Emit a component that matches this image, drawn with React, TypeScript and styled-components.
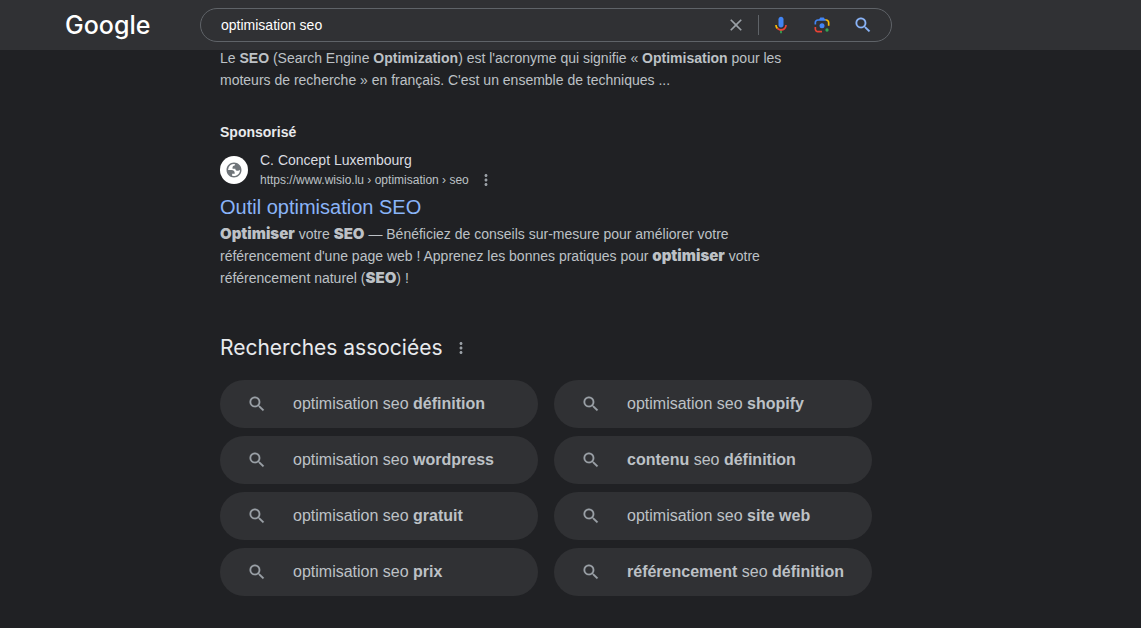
import React from 'react';
import styled, { createGlobalStyle } from 'styled-components';

const GlobalStyle = createGlobalStyle`
  * { box-sizing: border-box; }
  body {
    margin: 0;
    background: #202124;
    color: #bdc1c6;
    font-family: "Liberation Sans", Arial, sans-serif;
    font-size: 14px;
    line-height: 22px;
  }
  button {
    display: inline-flex;
    align-items: center;
    justify-content: center;
    padding: 0;
    border: 0;
    background: none;
    color: inherit;
    cursor: pointer;
  }
  a { color: inherit; text-decoration: none; }
  p, h1, h2, h3, ul { margin: 0; padding: 0; font-weight: 400; }
  svg { display: block; fill: currentColor; }
`;

const Header = styled.header`
  position: sticky;
  top: 0;
  display: flex;
  align-items: center;
  height: 50px;
  padding: 0 16px 0 65px;
  background: #303134;
`;

const Logo = styled.a`
  flex: 0 0 135px;
  color: #fff;
  font: 500 25px/32px Inter, sans-serif;
`;

const SearchForm = styled.form`
  display: flex;
  flex: 0 1 692px;
  align-items: center;
  height: 34px;
  padding: 0 8px 0 20px;
  border: 1px solid #5f6368;
  border-radius: 17px;
`;

const SearchInput = styled.input`
  flex: 1;
  min-width: 0;
  padding: 0;
  border: 0;
  outline: 0;
  background: none;
  color: #fff;
  font: 14px/22px "Liberation Sans", Arial, sans-serif;
`;

const ClearButton = styled.button`
  width: 44px;
  height: 32px;
  color: #9aa0a6;
`;

const Tools = styled.div`
  display: flex;
  align-items: center;
  height: 20px;
  border-left: 1px solid #5f6368;
  padding-left: 1px;
`;

const ToolButton = styled.button`
  width: 41px;
  height: 32px;
  color: #8ab4f8;
`;

const Main = styled.main`
  max-width: 892px;
  margin-top: -3px;
  padding: 0 20px 32px 220px;
`;

const Snippet = styled.p`
  max-width: 590px;
`;

const Strong = styled.b`
  font: 900 15px/22px Inter, sans-serif;
`;

const Ad = styled.article`
  margin-top: 30px;
`;

const Sponsored = styled.h2`
  color: #e8eaed;
  font-size: 14px;
  font-weight: 700;
`;

const Advertiser = styled.div`
  display: flex;
  align-items: center;
  gap: 12px;
  margin-top: 7px;
`;

const Favicon = styled.span`
  display: flex;
  align-items: center;
  justify-content: center;
  width: 28px;
  height: 28px;
  border-radius: 50%;
  background: #fff;
  color: #70757a;
`;

const SiteName = styled.div`
  color: #dadce0;
  line-height: 20px;
`;

const SiteUrl = styled.div`
  display: flex;
  align-items: center;
  gap: 8px;
  font-size: 12px;
  line-height: 20px;
`;

const MoreButton = styled.button`
  width: 18px;
  height: 20px;
  color: #9aa0a6;
`;

const AdTitle = styled.h3`
  margin: 4px 0 3px;
  color: #8ab4f8;
  font-size: 20px;
  line-height: 26px;
`;

const RelatedHeader = styled.div`
  display: flex;
  align-items: center;
  gap: 9px;
  margin: 45px 0 18px;
`;

const RelatedTitle = styled.h2`
  color: #e8eaed;
  font: 400 21px/28px Inter, sans-serif;
`;

const RelatedGrid = styled.ul`
  display: grid;
  grid-template-columns: repeat(2, minmax(0, 1fr));
  gap: 8px 16px;
  list-style: none;
`;

const RelatedLink = styled.a`
  display: flex;
  align-items: center;
  gap: 26px;
  min-height: 48px;
  padding: 0 27px;
  border-radius: 24px;
  background: #303134;
  font-size: 16px;

  svg { flex: none; color: #9aa0a6; }
`;

const SearchIcon = () => (
  <svg width="20" height="20" viewBox="0 0 24 24" stroke="currentColor" strokeWidth="0.2" aria-hidden="true">
    <path d="M15.5 14h-.79l-.28-.27A6.47 6.47 0 0 0 16 9.5 6.5 6.5 0 1 0 9.5 16c1.61 0 3.09-.59 4.23-1.57l.27.28v.79l5 4.99L20.49 19l-4.99-5zm-6 0C7.01 14 5 11.99 5 9.5S7.01 5 9.5 5 14 7.01 14 9.5 11.99 14 9.5 14z" />
  </svg>
);

const CloseIcon = () => (
  <svg width="20" height="20" viewBox="0 0 24 24" aria-hidden="true">
    <path d="M19 6.41 17.59 5 12 10.59 6.41 5 5 6.41 10.59 12 5 17.59 6.41 19 12 13.41 17.59 19 19 17.59 13.41 12z" />
  </svg>
);

const MicIcon = () => (
  <svg width="20" height="20" viewBox="0 0 24 24" aria-hidden="true">
    <path fill="#4285f4" d="m12 15c1.66 0 3-1.31 3-2.97v-7.02c0-1.66-1.34-3.01-3-3.01s-3 1.34-3 3.01v7.02c0 1.66 1.34 2.97 3 2.97z" />
    <path fill="#34a853" d="m11 18.08h2v3.92h-2z" />
    <path fill="#fbbc04" d="m7.05 16.87c-1.27-1.33-2.05-2.83-2.05-4.87h2c0 1.45.56 2.42 1.47 3.38v.32l-1.15 1.18z" />
    <path fill="#ea4335" d="m12 16.93a4.97 5.25 0 0 1-3.54-1.55l-1.41 1.49c1.26 1.34 3.02 2.13 4.95 2.13 3.87 0 6.99-2.92 6.99-7h-1.99c0 2.92-2.24 4.93-5 4.93z" />
  </svg>
);

const LensIcon = () => (
  <svg width="20" height="20" viewBox="0 0 192 192" aria-hidden="true">
    <circle fill="#34a853" cx="144" cy="144" r="16" />
    <circle fill="#4285f4" cx="96" cy="104" r="24" />
    <path fill="#ea4335" d="M24 135.2c0 18.11 14.69 32.8 32.8 32.8H96v-16l-40.1-.1c-8.8 0-15.9-8.19-15.9-17.9v-18H24z" />
    <path fill="#fbbc04" d="M168 72.8c0-18.11-14.69-32.8-32.8-32.8H116l20 16c8.8 0 16 8.29 16 18v30h16z" />
    <path fill="#4285f4" d="M112 24H80L68 40H56.8C38.69 40 24 54.69 24 72.8V92h16V74c0-9.71 7.2-18 16-18h80z" />
  </svg>
);

const GlobeIcon = () => (
  <svg width="18" height="18" viewBox="0 0 24 24" aria-hidden="true">
    <path d="M12 2c5.52 0 10 4.48 10 10s-4.48 10-10 10S2 17.52 2 12 6.48 2 12 2zM4 12h4.4c3.407.022 4.922 1.73 4.543 5.127H9.488v2.47a8.004 8.004 0 0 0 10.498-8.083C19.327 12.504 18.332 13 17 13c-2.137 0-3.206-.916-3.206-2.75h-3.748c-.274-2.728.683-4.092 2.87-4.092 0-.975.327-1.597.811-1.97A8.004 8.004 0 0 0 4 12z" />
  </svg>
);

const MoreIcon = () => (
  <svg width="18" height="18" viewBox="0 0 24 24" aria-hidden="true">
    <path d="M12 8c1.1 0 2-.9 2-2s-.9-2-2-2-2 .9-2 2 .9 2 2 2zm0 2c-1.1 0-2 .9-2 2s.9 2 2 2 2-.9 2-2-.9-2-2-2zm0 6c-1.1 0-2 .9-2 2s.9 2 2 2 2-.9 2-2-.9-2-2-2z" />
  </svg>
);

const related: React.ReactNode[] = [
  <>optimisation seo <b>définition</b></>,
  <>optimisation seo <b>shopify</b></>,
  <>optimisation seo <b>wordpress</b></>,
  <><b>contenu</b> seo <b>définition</b></>,
  <>optimisation seo <b>gratuit</b></>,
  <>optimisation seo <b>site web</b></>,
  <>optimisation seo <b>prix</b></>,
  <><b>référencement</b> seo <b>définition</b></>,
];

export default function App() {
  return (
    <>
      <GlobalStyle />
      <Header>
        <Logo href="#">Google</Logo>
        <SearchForm role="search">
          <SearchInput type="text" aria-label="Rechercher" defaultValue="optimisation seo" />
          <ClearButton type="button" aria-label="Effacer"><CloseIcon /></ClearButton>
          <Tools>
            <ToolButton type="button" aria-label="Recherche vocale"><MicIcon /></ToolButton>
            <ToolButton type="button" aria-label="Recherche par image"><LensIcon /></ToolButton>
            <ToolButton type="submit" aria-label="Recherche"><SearchIcon /></ToolButton>
          </Tools>
        </SearchForm>
      </Header>
      <Main>
        <Snippet>
          Le <b>SEO</b> (Search Engine <b>Optimization</b>) est l'acronyme qui signifie « <b>Optimisation</b> pour les
          moteurs de recherche » en français. C'est un ensemble de techniques ...
        </Snippet>
        <Ad>
          <Sponsored>Sponsorisé</Sponsored>
          <Advertiser>
            <Favicon><GlobeIcon /></Favicon>
            <div>
              <SiteName>C. Concept Luxembourg</SiteName>
              <SiteUrl>
                <a href="#">https://www.wisio.lu › optimisation › seo</a>
                <MoreButton type="button" aria-label="Plus d'options"><MoreIcon /></MoreButton>
              </SiteUrl>
            </div>
          </Advertiser>
          <AdTitle><a href="#">Outil optimisation SEO</a></AdTitle>
          <Snippet>
            <Strong>Optimiser</Strong> votre <Strong>SEO</Strong> — Bénéficiez de conseils sur-mesure pour améliorer votre
            référencement d'une page web ! Apprenez les bonnes pratiques pour <Strong>optimiser</Strong> votre
            référencement naturel (<Strong>SEO</Strong>) !
          </Snippet>
        </Ad>
        <section>
          <RelatedHeader>
            <RelatedTitle>Recherches associées</RelatedTitle>
            <MoreButton type="button" aria-label="À propos de ces suggestions"><MoreIcon /></MoreButton>
          </RelatedHeader>
          <RelatedGrid>
            {related.map((label, i) => (
              <li key={i}>
                <RelatedLink href="#"><SearchIcon /><span>{label}</span></RelatedLink>
              </li>
            ))}
          </RelatedGrid>
        </section>
      </Main>
    </>
  );
}
